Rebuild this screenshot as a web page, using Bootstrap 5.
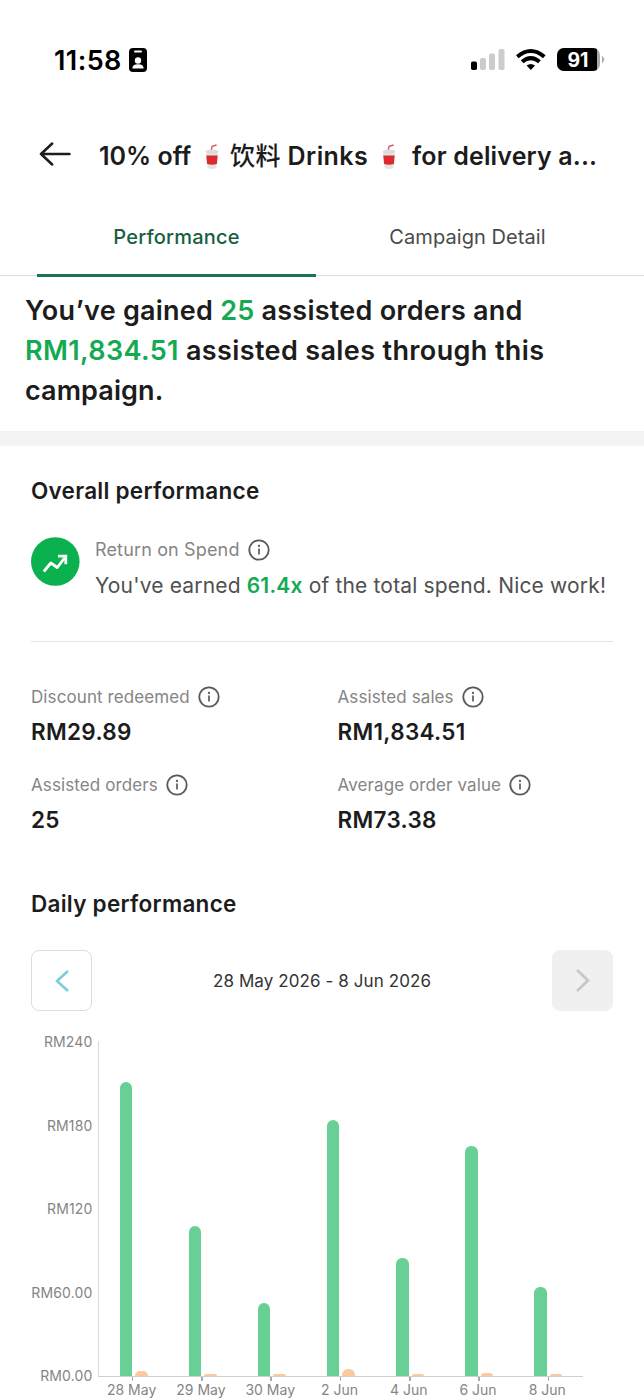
<!DOCTYPE html>
<html lang="en">
<head>
<meta charset="utf-8">
<meta name="viewport" content="width=device-width, initial-scale=1">
<title>Campaign performance</title>
<link href="https://cdn.jsdelivr.net/npm/bootstrap@5.3.0/dist/css/bootstrap.min.css" rel="stylesheet">
<style>
body{font-family:Inter,"Noto Sans CJK SC",sans-serif;color:#1c1c1c;background:#fff;overflow:hidden;height:1400px}
svg{display:block;flex:none}
.t{white-space:nowrap}
.statusbar{height:118px;padding:1px 39px 0 54px}
.clock{font-size:27px;line-height:30px;font-weight:600;letter-spacing:.4px;color:#000;width:75px;padding-top:2px}
.titlebar{height:74px;padding-left:39px}
.heading{font-size:25px;font-weight:600;margin-left:28px;padding-top:3px}
.hc1{margin:0 9px 0 12px}
.hc2{margin:0 14px 0 12px}
.h1b{letter-spacing:.4px}
.h1b i{font-style:normal;font-weight:500}
.h1c{letter-spacing:.15px}
.tabs{height:84px;padding:0 37px;gap:12px;border-bottom:1px solid #dedede}
.tab{flex:1;font-size:20px;line-height:91px;height:84.5px;color:#4a4a4a;text-align:center;text-decoration:none;letter-spacing:.07px}
.tab.on{color:#17603f;font-weight:500;border-bottom:3px solid #1b7550;letter-spacing:.2px}
.summary{font-size:27px;line-height:40px;font-weight:600;padding:14.500px 0 0 25px;height:155px}
.s1{letter-spacing:.24px}
.s2{letter-spacing:.37px}
.s3{letter-spacing:.1px}
.gr{color:#14aa52}
.band{height:15px;background:#f3f3f3}
.sec{font-size:22.500px;line-height:30px;font-weight:600;letter-spacing:.26px}
.ros{height:50px;margin-top:31px}
.lab{font-size:17px;line-height:24px;color:#858585;gap:8px;letter-spacing:.1px}
.rt .lab{font-size:18px;letter-spacing:.15px}
.say{font-size:21px;line-height:28px;color:#505050;letter-spacing:.17px}
.rule{height:1px;background:#e3e3e3}
.val{font-size:22.500px;line-height:30px;font-weight:600;margin-top:8px;letter-spacing:.3px}
.sq{width:61px;height:61px;border-radius:8px;border:1.5px solid #ddd}
.sq.off{background:#f0f0f0;border-color:#f0f0f0}
.range{font-size:17px;color:#333;letter-spacing:.09px;padding-top:2px}
.chart{margin-top:30px;height:336px}
.yax{width:63px;font-size:14px;line-height:18px;color:#858585;text-align:right;height:352px;margin-top:-8px;padding-right:1.5px;letter-spacing:.15px}
.plot{width:485px;height:336px;margin-left:4px;border-left:1px solid #d8d8d8;border-bottom:1.5px solid #cfcfcf}
.grp{flex:1;gap:3px}
.b{width:12.5px;border-radius:6px 6px 0 0;background:#68d095}
.o{background:#fac9a0}
.o.low{height:2px;border-radius:3px 3px 0 0}
.xax{width:485px;margin-left:98px;font-size:14px;line-height:18px;color:#858585}
.xl{flex:1;text-align:center}
.xl b{font-weight:400;margin-left:-2px}
.xl::before{content:"";display:block;width:1.5px;height:4px;background:#aaa;margin:0 auto}
</style>
</head>
<body>
<svg width="0" height="0" class="position-absolute"><defs>
<symbol id="info" viewBox="0 0 22 22"><circle cx="11" cy="11" r="9.7" fill="none" stroke="#5a5a5a" stroke-width="1.8"/><path d="M11 9.6v6" stroke="#5a5a5a" stroke-width="1.7"/><circle cx="11" cy="6.9" r="1.15" fill="#5a5a5a"/></symbol>
<symbol id="cup" viewBox="0 0 18 26"><path d="M8 7 9.2 2.2 13.6 1" fill="none" stroke="#d5545c" stroke-width="1.4"/><path d="M3 7h12l-1.6 17q-4.400 2-8.800 0z" fill="#e4e2e2"/><path d="M3.300 11.400h11.400l-.8 8.600q-4.900 1.600-9.800 0z" fill="#dc2b2d"/><ellipse cx="9" cy="7.600" rx="6.600" ry="2" fill="#d9dcdd"/></symbol>
</defs></svg>

<header class="statusbar d-flex align-items-center">
 <span class="clock t">11:58</span>
 <svg width="18" height="24" viewBox="0 0 18 24"><rect width="18" height="24" rx="4" fill="#000"/><rect x="5" y="2.500" width="8" height="2" rx="1" fill="#fff"/><circle cx="9" cy="12.500" r="3.200" fill="#fff"/><path d="M3.300 20.600q0-4.400 5.700-4.400t5.700 4.400z" fill="#fff"/></svg>
 <svg class="ms-auto" width="134" height="26" viewBox="0 0 134 26">
  <rect x="0" y="14.500" width="6" height="8.500" rx="1.800" fill="#000"/><rect x="9" y="11" width="6" height="12" rx="1.800" fill="#ccc"/><rect x="18" y="6.500" width="6" height="16.500" rx="1.800" fill="#ccc"/><rect x="27.500" y="2" width="6" height="21" rx="1.800" fill="#ccc"/>
  <g fill="none" stroke="#000" stroke-width="4"><path d="M46.300 9.700q13.500-11.500 27 0"/><path d="M51.100 14.800q8.700-7.400 17.400 0"/></g><path d="M55.600 18.600q4.200-3.200 8.400 0L59.800 23z" fill="#000"/>
  <clipPath id="bc"><rect x="86" y="1" width="43" height="23" rx="7"/></clipPath><g clip-path="url(#bc)"><path fill="#aaa" d="M86 1h43v23H86z"/><path fill="#000" d="M86 1h40v23H86z"/></g><path d="M131.500 9.500q2.600 3 0 6z" fill="#aaa" stroke="#aaa"/>
  <text x="107" y="19.500" text-anchor="middle" font-size="19.500" font-weight="700" fill="#fff" font-family="Inter">91</text>
 </svg>
</header>

<div class="titlebar d-flex align-items-center">
 <svg width="32" height="26" viewBox="0 0 32 26"><path d="M30.500 12H2M13.200 1.500 2 12l11.200 10.500" fill="none" stroke="#1c1c1c" stroke-width="2.500" stroke-linecap="round" stroke-linejoin="round"/></svg>
 <div class="heading t d-flex align-items-center"><span>10% off</span><svg width="18" height="26" class="hc1"><use href="#cup"/></svg><span class="h1b"><i>饮料</i> Drinks</span><svg width="18" height="26" class="hc2"><use href="#cup"/></svg><span class="h1c">for delivery a...</span></div>
</div>

<nav class="tabs d-flex"><a class="tab on" href="#">Performance</a><a class="tab" href="#">Campaign Detail</a></nav>

<div class="summary"><div class="t s1">You’ve gained <span class="gr">25</span> assisted orders and</div><div class="t s2"><span class="gr">RM1,834.51</span> assisted sales through this</div><div class="t s3">campaign.</div></div>
<div class="band"></div>

<main style="padding:0 31px">
 <div class="sec t" style="padding-top:30px">Overall performance</div>
 <div class="ros d-flex">
  <svg width="49" height="49" viewBox="0 0 49 49"><circle cx="24.300" cy="24.500" r="24.300" fill="#0bb14e"/><path d="M12.800 34.500 19.800 26l6.500 4.500L33.500 21" fill="none" stroke="#fff" stroke-width="2.800" stroke-linejoin="round"/><path d="M27 19.200h7.800v8" fill="none" stroke="#fff" stroke-width="2.800"/></svg>
  <div class="rt" style="margin-left:15px;padding-top:1px"><div class="lab t d-flex align-items-center">Return on Spend <svg width="22" height="22"><use href="#info"/></svg></div><div class="say t" style="margin-top:10px">You've earned <b class="gr fw-semibold">61.4x</b> of the total spend. Nice work!</div></div>
 </div>
 <div class="rule" style="margin-top:54px"></div>
 <div class="row g-0" style="margin-top:43px">
  <div style="width:306.500px"><div class="lab t d-flex align-items-center">Discount redeemed <svg width="22" height="22"><use href="#info"/></svg></div><div class="val">RM29.89</div></div>
  <div class="col"><div class="lab t d-flex align-items-center">Assisted sales <svg width="22" height="22"><use href="#info"/></svg></div><div class="val">RM1,834.51</div></div>
 </div>
 <div class="row g-0" style="margin-top:26px">
  <div style="width:306.500px"><div class="lab t d-flex align-items-center">Assisted orders <svg width="22" height="22"><use href="#info"/></svg></div><div class="val">25</div></div>
  <div class="col"><div class="lab t d-flex align-items-center">Average order value <svg width="22" height="22"><use href="#info"/></svg></div><div class="val">RM73.38</div></div>
 </div>
 <div class="sec t" style="margin-top:54px">Daily performance</div>
 <div class="d-flex align-items-center justify-content-between" style="margin-top:31px">
  <div class="sq d-flex align-items-center justify-content-center"><svg width="16" height="24" viewBox="0 0 16 24"><path d="M14 2 3 12l11 10" fill="none" stroke="#7fcbdc" stroke-width="2.600"/></svg></div>
  <span class="range t">28 May 2026 - 8 Jun 2026</span>
  <div class="sq off d-flex align-items-center justify-content-center"><svg width="16" height="24" viewBox="0 0 16 24"><path d="M2 1 13 11.500 2 22" fill="none" stroke="#c6c6c6" stroke-width="2.600"/></svg></div>
 </div>
</main>
<div class="chart d-flex">
 <div class="yax d-flex flex-column justify-content-between" style="margin-left:31px"><span>RM240</span><span>RM180</span><span>RM120</span><span>RM60.00</span><span>RM0.00</span></div>
 <div class="plot d-flex">
  <div class="grp d-flex align-items-end justify-content-center"><div class="b" style="height:294px"></div><div class="b o" style="height:5px"></div></div>
  <div class="grp d-flex align-items-end justify-content-center"><div class="b" style="height:150px"></div><div class="b o low"></div></div>
  <div class="grp d-flex align-items-end justify-content-center"><div class="b" style="height:73px"></div><div class="b o low"></div></div>
  <div class="grp d-flex align-items-end justify-content-center"><div class="b" style="height:256px"></div><div class="b o" style="height:7px"></div></div>
  <div class="grp d-flex align-items-end justify-content-center"><div class="b" style="height:118px"></div><div class="b o low"></div></div>
  <div class="grp d-flex align-items-end justify-content-center"><div class="b" style="height:230px"></div><div class="b o" style="height:3px"></div></div>
  <div class="grp d-flex align-items-end justify-content-center"><div class="b" style="height:89px"></div><div class="b o low"></div></div>
 </div>
</div>
<div class="xax d-flex"><span class="xl"><b>28 May</b></span><span class="xl"><b>29 May</b></span><span class="xl"><b>30 May</b></span><span class="xl"><b>2 Jun</b></span><span class="xl"><b>4 Jun</b></span><span class="xl"><b>6 Jun</b></span><span class="xl"><b>8 Jun</b></span></div>
<script src="https://cdn.jsdelivr.net/npm/bootstrap@5.3.0/dist/js/bootstrap.bundle.min.js"></script>
</body>
</html>
